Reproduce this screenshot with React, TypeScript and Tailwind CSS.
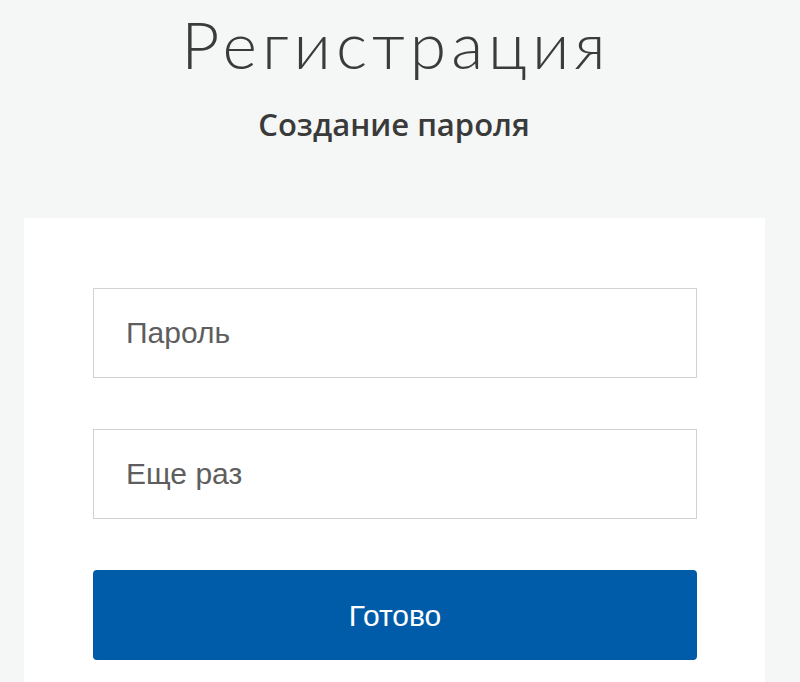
export default function App() {
  return (
    <div className="h-[682px] w-[800px] overflow-hidden bg-[#f4f7f6] font-['Liberation_Sans',Arial,sans-serif]">
      <div className="flex flex-col items-center pt-[4px]">
        <h1 className="mr-[8px] font-['Lato',sans-serif] text-[66px] font-light leading-[80px] tracking-[5px] text-[#3b3b3b]">
          Регистрация
        </h1>
        <p className="mr-[12px] mt-[20px] font-['Open_Sans',sans-serif] text-[31px] font-semibold leading-[40px] text-[#3a3a3a]">
          Создание пароля
        </p>
      </div>
      <div className="ml-[24px] mt-[74px] h-[520px] w-[741px] bg-white px-[69px] pt-[70px]">
        <form className="flex flex-col gap-[51px]" onSubmit={(e) => e.preventDefault()}>
          <input
            type="password"
            placeholder="Пароль"
            className="h-[90px] w-[604px] border border-[#d2d2d2] px-[32px] text-[30px] text-[#555] outline-none placeholder:text-[#5e5e5e]"
          />
          <input
            type="password"
            placeholder="Еще раз"
            className="h-[90px] w-[604px] border border-[#d2d2d2] px-[32px] text-[30px] text-[#555] outline-none placeholder:text-[#5e5e5e]"
          />
          <button
            type="submit"
            className="h-[90px] w-[604px] rounded-[4px] bg-[#005ca9] text-[30px] text-white"
          >
            Готово
          </button>
        </form>
      </div>
    </div>
  )
}
